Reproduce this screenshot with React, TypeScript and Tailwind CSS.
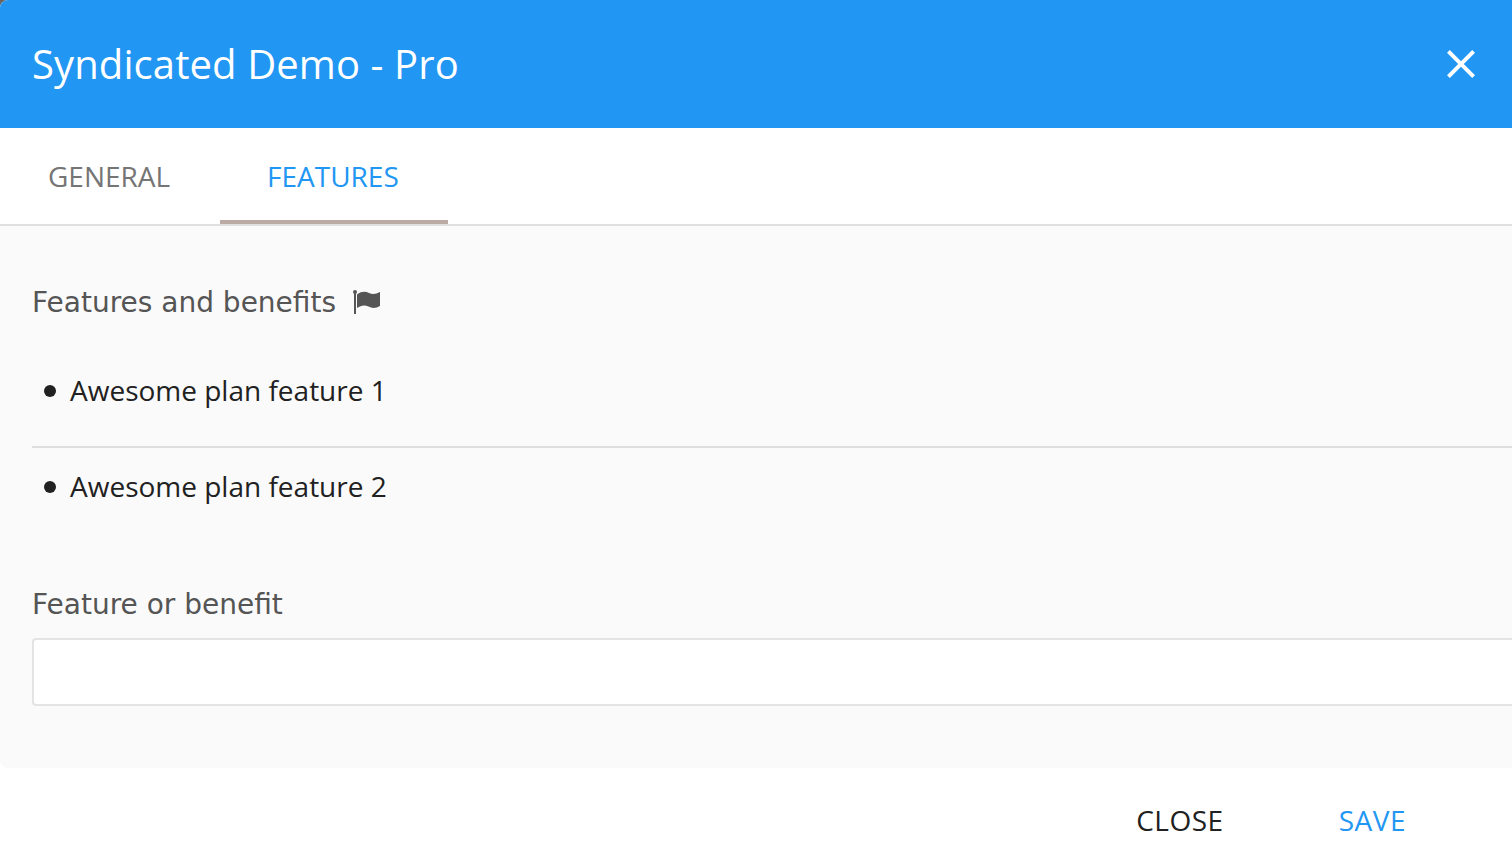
export default function App() {
  return (
    <div className="bg-[#6b635c] w-[1512px] h-[863px] overflow-hidden">
      <div className="flex h-full flex-col overflow-hidden rounded-tl-lg bg-white font-['Open_Sans',sans-serif]">
        <header className="flex h-32 shrink-0 items-center justify-between bg-[#2196f3] pl-8 pr-[37px] text-white">
          <h1 className="text-[40px] leading-[56px] whitespace-nowrap tracking-[0.1px]">Syndicated Demo - Pro</h1>
          <button aria-label="Close" className="block">
            <svg width="28" height="28" viewBox="0 0 28 28" fill="currentColor">
              <path d="M28 2.8 25.2 0 14 11.2 2.8 0 0 2.8 11.2 14 0 25.2 2.8 28 14 16.8 25.2 28 28 25.2 16.8 14z" />
            </svg>
          </button>
        </header>
        <nav className="flex h-[98px] shrink-0 border-b-2 border-[#e0e0e0] text-[28px] leading-[40px]">
          <button className="flex w-[220px] items-center pl-12 text-[#757575]">GENERAL</button>
          <button className="flex w-[228px] items-center border-b-4 border-[#bcaaa4] pl-[47px] pt-1 text-[#2196f3]">FEATURES</button>
        </nav>
        <main className="h-[542px] shrink-0 rounded-bl-lg bg-[#fafafa] pl-8 pt-[55px] text-[#212121]">
          <h2 className="flex h-11 items-center gap-[17px] font-['DejaVu_Sans',sans-serif] text-[28px] text-[#555]">
            Features and benefits
            <svg width="27" height="26" viewBox="0 0 27 26" className="-mt-0.5" fill="currentColor">
              <circle cx="2" cy="3" r="2" />
              <path d="M1 3h2v22H1zM4 5.400C8.500 2.300 12.500 2.300 16 4C20 5.800 23 5 27 3V17C23 19.400 19 19.400 15.500 17.600C11.500 15.600 8 16.500 4 19z" />
            </svg>
          </h2>
          <ul className="mt-[17px] text-[28px]">
            <li className="flex h-[106px] items-center border-b-2 border-[#dedede] pb-[9px] pl-3"><span className="mr-[14px] mt-0.5 size-3 rounded-full bg-current" />Awesome plan feature 1</li>
            <li className="flex h-20 items-center pb-[5px] pl-3"><span className="mr-[14px] mt-0.5 size-3 rounded-full bg-current" />Awesome plan feature 2</li>
          </ul>
          <label className="mt-14 block font-['DejaVu_Sans',sans-serif] text-[28px] leading-[42px] text-[#555]">Feature or benefit
            <input className="mt-3 block h-[68px] w-full rounded-l border-2 border-r-0 border-[#e4e4e4] bg-white px-4 outline-none" />
          </label>
        </main>
        <footer className="flex h-[104px] shrink-0 items-center justify-end gap-[115px] pr-[106px] text-[28px] tracking-[0.5px]">
          <button className="text-[#212121]">CLOSE</button>
          <button className="text-[#2196f3]">SAVE</button>
        </footer>
      </div>
    </div>
  );
}
